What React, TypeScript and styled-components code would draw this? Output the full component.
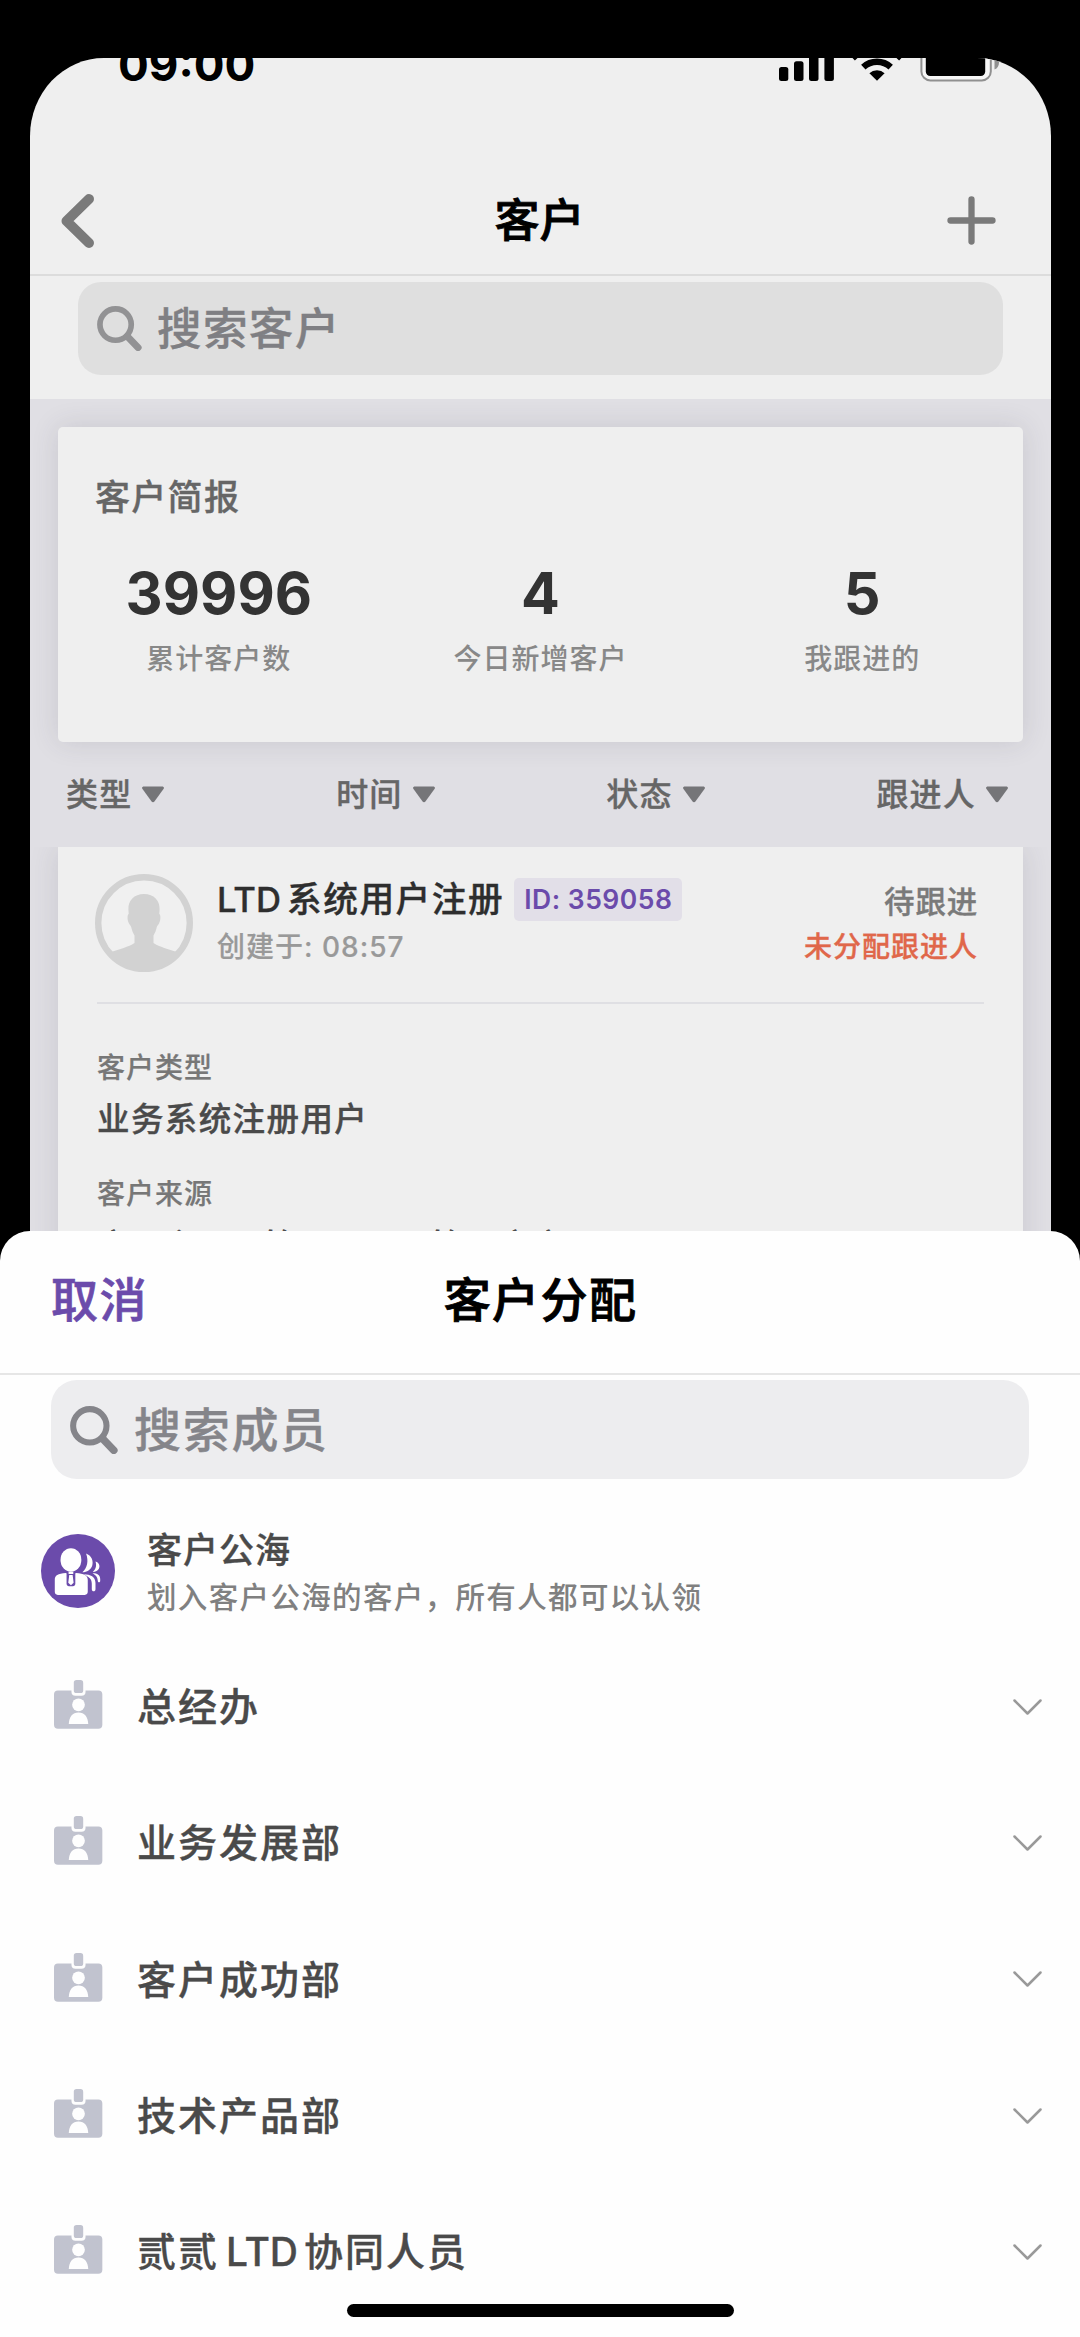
import React from "react";
import styled, { createGlobalStyle } from "styled-components";

const GlobalStyle = createGlobalStyle`
  * { box-sizing: border-box; }
  body {
    margin: 0;
    background: #000;
    font-family: Inter, "Noto Sans CJK SC", sans-serif;
    font-weight: 500;
    -webkit-text-stroke: 0.35px currentColor;
  }
`;

const Phone = styled.div`
  position: relative;
  width: 1080px;
  height: 2337px;
  padding: 58px 29px 0 30px;
  overflow: hidden;
  background: #000;
`;

const Page = styled.main`
  height: 1200px;
  overflow: hidden;
  border-radius: 74px 74px 0 0 / 78px 78px 0 0;
  background: #efefef;
`;

const StatusBar = styled.div`
  display: flex;
  justify-content: space-between;
  align-items: flex-start;
  height: 110px;
  padding: 0 50px 0 88px;
`;

const Clock = styled.span`
  margin-top: -10px;
  font-size: 45.7px;
  line-height: 34px;
  font-weight: 700;
  -webkit-text-stroke: 0;
  color: #000;
`;

const NavBar = styled.header`
  display: flex;
  align-items: center;
  justify-content: space-between;
  height: 108px;
  padding: 0 55px 1px 31px;
  border-bottom: 2px solid #dcdcdc;
`;

const NavTitle = styled.h1`
  margin: 0;
  padding-left: 38px;
  font-size: 45px;
  font-weight: 500;
  line-height: 50px;
  -webkit-text-stroke-width: 0.9px;
  color: #000;
`;

const SearchArea = styled.div<{ $pad: string }>`
  padding: ${(p) => p.$pad};
`;

const SearchBox = styled.div<{ $size: "page" | "sheet" }>`
  display: flex;
  align-items: center;
  height: ${(p) => (p.$size === "page" ? 93 : 99)}px;
  padding-left: 19px;
  gap: ${(p) => (p.$size === "page" ? 15 : 16)}px;
  border-radius: ${(p) => (p.$size === "page" ? 23 : 26)}px;
  background: ${(p) => (p.$size === "page" ? "#dfdfdf" : "#ededef")};
  color: ${(p) => (p.$size === "page" ? "#7f7f83" : "#85858a")};
  font-size: ${(p) => (p.$size === "page" ? 44.5 : 47)}px;
  letter-spacing: ${(p) => (p.$size === "page" ? 1.4 : 1.7)}px;
  line-height: 56px;
`;

const Body = styled.section`
  height: 900px;
  padding: 28px 28px 0;
  background: #e0dfe4;
`;

const ReportCard = styled.section`
  height: 315px;
  padding-top: 50px;
  border-radius: 5px;
  background: #efefef;
  box-shadow: 0 0 28px rgba(60, 60, 80, 0.14);
`;

const ReportTitle = styled.h2`
  margin: 0 0 46px;
  padding-left: 37px;
  font-size: 35px;
  letter-spacing: 1.3px;
  line-height: 40px;
  font-weight: 500;
  color: #666;
`;

const Stats = styled.div`
  display: grid;
  grid-template-columns: repeat(3, 1fr);
`;

const Stat = styled.div`
  display: flex;
  flex-direction: column;
  align-items: center;
  gap: 20px;
`;

const StatValue = styled.span`
  font-size: 57.5px;
  font-weight: 700;
  line-height: 60px;
  -webkit-text-stroke: 0;
  color: #333;
`;

const StatLabel = styled.span`
  font-size: 28px;
  letter-spacing: 1px;
  line-height: 32px;
  -webkit-text-stroke-width: 0;
  color: #888;
`;

const Filters = styled.div`
  display: flex;
  align-items: center;
  justify-content: space-between;
  height: 105px;
  padding: 0 15px 0 8px;
`;

const Filter = styled.button`
  display: flex;
  align-items: center;
  gap: 10px;
  padding: 0;
  border: 0;
  background: none;
  font: inherit;
  font-size: 32px;
  letter-spacing: 1.2px;
  line-height: 40px;
  color: #666;
`;

const CustomerCard = styled.article`
  height: 500px;
  background: #efefef;
  box-shadow: 0 0 28px rgba(60, 60, 80, 0.14);
  clip-path: inset(0 -28px 0 -28px);
`;

const CustomerHead = styled.div`
  display: flex;
  height: 155px;
  padding: 27px 45px 0 37px;
`;

const CustomerMain = styled.div`
  flex: 1;
  padding: 4px 0 0 24px;
`;

const NameRow = styled.div`
  display: flex;
  align-items: center;
  height: 43px;
  margin-bottom: 10px;
`;

const Name = styled.span`
  font-size: 34.7px;
  letter-spacing: 1.5px;
  line-height: 43px;
  color: #2e2e2e;
`;

const Latin = styled.span<{ $first?: boolean }>`
  margin-left: ${(p) => (p.$first ? 0 : 7)}px;
  margin-right: 6px;
  letter-spacing: 0;
`;

const IdTag = styled.span`
  height: 43px;
  margin-left: 10px;
  padding: 0 10px;
  border-radius: 5px;
  background: #e2dfe8;
  font-size: 26.5px;
  letter-spacing: 0.5px;
  line-height: 42px;
  font-weight: 600;
  white-space: nowrap;
  -webkit-text-stroke: 0;
  color: #6b4bab;
`;

const Created = styled.div`
  font-size: 28px;
  letter-spacing: 1px;
  line-height: 32px;
  -webkit-text-stroke-width: 0.2px;
  color: #999;
`;

const CustomerSide = styled.div`
  display: flex;
  flex-direction: column;
  align-items: flex-end;
  gap: 9px;
  padding-top: 8px;
`;

const State = styled.span`
  font-size: 30.5px;
  letter-spacing: 0.8px;
  line-height: 40px;
  color: #7a7a7a;
`;

const Warning = styled.span`
  font-size: 28px;
  letter-spacing: 1px;
  line-height: 32px;
  color: #e0674a;
`;

const Fields = styled.dl`
  margin: 0 39px;
  padding: 48px 0 0;
  border-top: 2px solid #dfdfe3;
`;

const FieldLabel = styled.dt`
  font-size: 28px;
  letter-spacing: 1px;
  line-height: 33px;
  -webkit-text-stroke-width: 0.2px;
  color: #777;
`;

const FieldValue = styled.dd`
  margin: 17px 0 40px;
  font-size: 32.5px;
  letter-spacing: 1.4px;
  line-height: 36px;
  white-space: nowrap;
  color: #4a4a4a;

  &:last-child {
    margin-top: 18px;
  }
`;

const Sheet = styled.section`
  position: absolute;
  inset: 1231px 0 0 0;
  display: flex;
  flex-direction: column;
  border-radius: 30px 30px 0 0;
  background: #fefefe;
`;

const SheetHead = styled.header`
  display: grid;
  grid-template-columns: 1fr auto 1fr;
  align-items: center;
  height: 144px;
  padding: 0 51px 5px;
  border-bottom: 2px solid #e6e6e6;
`;

const Cancel = styled.button`
  justify-self: start;
  padding: 0;
  border: 0;
  background: none;
  font: inherit;
  font-size: 47px;
  letter-spacing: 1.5px;
  line-height: 56px;
  -webkit-text-stroke-width: 0.7px;
  color: #6b4bab;
`;

const SheetTitle = styled.h2`
  margin: 0;
  padding-left: 1px;
  font-size: 47px;
  letter-spacing: 1.4px;
  line-height: 56px;
  font-weight: 500;
  -webkit-text-stroke-width: 0.9px;
  color: #000;
`;

const PoolRow = styled.div`
  display: flex;
  align-items: center;
  height: 136px;
  margin-top: 24px;
  padding-left: 41px;
  gap: 32px;
`;

const PoolText = styled.div`
  display: flex;
  flex-direction: column;
  gap: 11px;
`;

const PoolName = styled.span`
  font-size: 35px;
  letter-spacing: 1px;
  line-height: 40px;
  color: #4a4a4a;
`;

const PoolHint = styled.span`
  font-size: 29.5px;
  letter-spacing: 1.35px;
  line-height: 32px;
  -webkit-text-stroke-width: 0;
  color: #808080;
`;

const Departments = styled.ul`
  margin: 0;
  padding: 0;
  list-style: none;
`;

const Department = styled.li`
  display: flex;
  align-items: center;
  height: 136.3px;
  padding: 0 38px 0 54px;
  gap: 34px;
`;

const DepartmentName = styled.span`
  flex: 1;
  font-size: 39px;
  letter-spacing: 2px;
  line-height: 48px;
  color: #4a4a4a;
`;

const HomeIndicator = styled.div`
  position: absolute;
  left: 347px;
  bottom: 20px;
  width: 387px;
  height: 13px;
  border-radius: 7px;
  background: #000;
`;

const StatusIcons = () => (
  <svg width="222" height="26" viewBox="778 58 222 26">
    <rect x="778" y="67" width="9.3" height="14" rx="2.5" />
    <rect x="793" y="61.2" width="9.5" height="19.8" rx="2.5" />
    <rect x="808" y="50" width="9.5" height="31" rx="2.5" />
    <rect x="823.4" y="44" width="9.5" height="37" rx="2.5" />
    <path d="M876 80.700l-7.600-7.400a11 11 0 0 1 15.200 0z" />
    <path d="M862.300 67.200a20 20 0 0 1 27.400 0" fill="none" stroke="#000" strokeWidth="6.400" />
    <path d="M852 58.500a34 34 0 0 1 48 0" fill="none" stroke="#000" strokeWidth="5.400" />
    <rect x="920.4" y="44" width="69.4" height="36.4" rx="9" fill="#f6f6f6" stroke="#909090" strokeWidth="2" />
    <rect x="924.8" y="48" width="59.4" height="28" rx="4.5" />
    <path d="M993.500 58v11.500c3-1 4.500-4 4.500-7V58z" fill="#909090" />
  </svg>
);

const BackIcon = () => (
  <svg width="33" height="54" viewBox="0 0 33 54" fill="none">
    <path d="M28 5L5.500 27 28 49" stroke="#7a7a7a" strokeWidth="10" strokeLinecap="round" strokeLinejoin="round" />
  </svg>
);

const PlusIcon = () => (
  <svg width="49" height="49" viewBox="0 0 49 49" fill="none">
    <path d="M24.500 3.500v42M3.500 24.500h42" stroke="#7a7a7a" strokeWidth="6.300" strokeLinecap="round" />
  </svg>
);

const SearchIcon = ({ size, color }: { size: number; color: string }) => (
  <svg width={size} height={size} viewBox="0 0 46 46" fill="none" stroke={color}>
    <circle cx="19" cy="19" r="16" strokeWidth="5.8" />
    <path d="M31 31l11 11.500" strokeWidth="7.2" strokeLinecap="round" />
  </svg>
);

const Triangle = () => (
  <svg width="22" height="17" viewBox="0 0 22 17">
    <path d="M2 .5h18c1.800 0 2.400 1.300 1.500 2.600L12.600 15.300c-.9 1.200-2.300 1.200-3.200 0L.5 3.100C-.4 1.800.2.5 2 .5z" fill="#757578" />
  </svg>
);

const AvatarIcon = () => (
  <svg width="98" height="98" viewBox="0 0 98 98">
    <circle cx="49" cy="49" r="45.8" fill="#f0f0f0" stroke="#d2d2d2" strokeWidth="6.4" />
    <path
      d="M49 20c-10 0-16 6.500-15.600 15.500l.3 4.500c-1.800 1-1.300 6.500.3 9.500.8 1.700 1.600 2 2.200 3.500.8 3.500 1.800 6 3.300 8.500v7.500c-6 4-15 6-23.500 9C22 89 34 97 49 97s27-8 33-19c-8.500-3-17.500-5-23.500-9v-7.500c1.500-2.500 2.500-5 3.300-8.500.6-1.500 1.400-1.800 2.200-3.500 1.600-3 2.100-8.500.3-9.500l.3-4.500C65 26.500 59 20 49 20z"
      fill="#d2d2d2"
    />
  </svg>
);

const PoolIcon = () => (
  <svg width="74" height="74" viewBox="0 0 220 220">
    <circle cx="110" cy="110" r="110" fill="#6b4bab" />
    <g fill="#fff">
      <ellipse cx="89" cy="77" rx="31" ry="35" />
      <path d="M41 172v-36c0-13 9-18 33-20l15 5 15-5c24 2 35 7 35 20v36c0 6-3 9-9 9H50c-6 0-9-3-9-9z" />
      <path d="M134 58c16 6 23 22 18 37-4 11-15 18-29 19 15-14 19-33 11-56z" />
      <path d="M162 82c12 4 14 14 10 21-3 6-9 9-18 10 9-9 12-18 8-31z" />
      <path d="M127 120c20 0 35 8 35 26v18c0 8-11 8-11 0v-16c0-14-8-20-24-28z" />
      <path d="M153 117c15 0 23 6 23 17v6c0 5-7 5-7 0-1-12-6-17-16-23z" />
    </g>
    <path d="M76 115h26v32c0 5-3 8-7 8H83c-4 0-7-3-7-8z" fill="#6b4bab" />
    <path d="M82 112h14v7H82zM84 122h10l3 23-8 7-8-7z" fill="#fff" />
  </svg>
);

const BadgeWrap = styled.span`
  display: flex;
  margin-bottom: 5px;
`;

const BadgeIcon = () => (
  <BadgeWrap>
    <svg width="49" height="49" viewBox="0 0 146 146">
      <rect x="0" y="31" width="144" height="114" rx="12" fill="#c1c3cf" />
      <rect x="52" y="-10" width="42" height="57" rx="12" fill="#fefefe" />
      <rect x="59" y="0" width="28" height="39" rx="8" fill="#c1c3cf" />
      <circle cx="73" cy="74" r="19" fill="#fefefe" />
      <path d="M44 131c1-21 11-34 29-34s28 13 29 34z" fill="#fefefe" />
    </svg>
  </BadgeWrap>
);

const ChevronDown = () => (
  <svg width="29" height="17" viewBox="0 0 29 17" fill="none">
    <path d="M1.500 1.500l13 13 13-13" stroke="#999" strokeWidth="2.5" strokeLinecap="round" strokeLinejoin="round" />
  </svg>
);

const stats = [
  { value: "39996", label: "累计客户数" },
  { value: "4", label: "今日新增客户" },
  { value: "5", label: "我跟进的" },
];

const filters = ["类型", "时间", "状态", "跟进人"];

const departments: React.ReactNode[] = [
  "总经办",
  "业务发展部",
  "客户成功部",
  "技术产品部",
  <>贰贰<Latin>LTD</Latin>协同人员</>,
];

export default function App() {
  return (
    <Phone>
      <GlobalStyle />
      <Page>
        <StatusBar>
          <Clock>09:00</Clock>
          <StatusIcons />
        </StatusBar>
        <NavBar>
          <BackIcon />
          <NavTitle>客户</NavTitle>
          <PlusIcon />
        </NavBar>
        <SearchArea $pad="6px 48px 24px">
          <SearchBox $size="page">
            <SearchIcon size={45} color="#929294" />
            搜索客户
          </SearchBox>
        </SearchArea>
        <Body>
          <ReportCard>
            <ReportTitle>客户简报</ReportTitle>
            <Stats>
              {stats.map((s) => (
                <Stat key={s.label}>
                  <StatValue>{s.value}</StatValue>
                  <StatLabel>{s.label}</StatLabel>
                </Stat>
              ))}
            </Stats>
          </ReportCard>
          <Filters>
            {filters.map((f) => (
              <Filter key={f}>
                {f}
                <Triangle />
              </Filter>
            ))}
          </Filters>
          <CustomerCard>
            <CustomerHead>
              <AvatarIcon />
              <CustomerMain>
                <NameRow>
                  <Name>
                    <Latin $first>LTD</Latin>系统用户注册
                  </Name>
                  <IdTag>ID: 359058</IdTag>
                </NameRow>
                <Created>创建于: 08:57</Created>
              </CustomerMain>
              <CustomerSide>
                <State>待跟进</State>
                <Warning>未分配跟进人</Warning>
              </CustomerSide>
            </CustomerHead>
            <Fields>
              <FieldLabel>客户类型</FieldLabel>
              <FieldValue>业务系统注册用户</FieldValue>
              <FieldLabel>客户来源</FieldLabel>
              <FieldValue>官网主页 · 管理员页 · 管理方案</FieldValue>
            </Fields>
          </CustomerCard>
        </Body>
      </Page>
      <Sheet>
        <SheetHead>
          <Cancel>取消</Cancel>
          <SheetTitle>客户分配</SheetTitle>
        </SheetHead>
        <SearchArea $pad="5px 51px 0">
          <SearchBox $size="sheet">
            <SearchIcon size={48} color="#85858a" />
            搜索成员
          </SearchBox>
        </SearchArea>
        <PoolRow>
          <PoolIcon />
          <PoolText>
            <PoolName>客户公海</PoolName>
            <PoolHint>划入客户公海的客户，所有人都可以认领</PoolHint>
          </PoolText>
        </PoolRow>
        <Departments>
          {departments.map((d, i) => (
            <Department key={i}>
              <BadgeIcon />
              <DepartmentName>{d}</DepartmentName>
              <ChevronDown />
            </Department>
          ))}
        </Departments>
        <HomeIndicator />
      </Sheet>
    </Phone>
  );
}
